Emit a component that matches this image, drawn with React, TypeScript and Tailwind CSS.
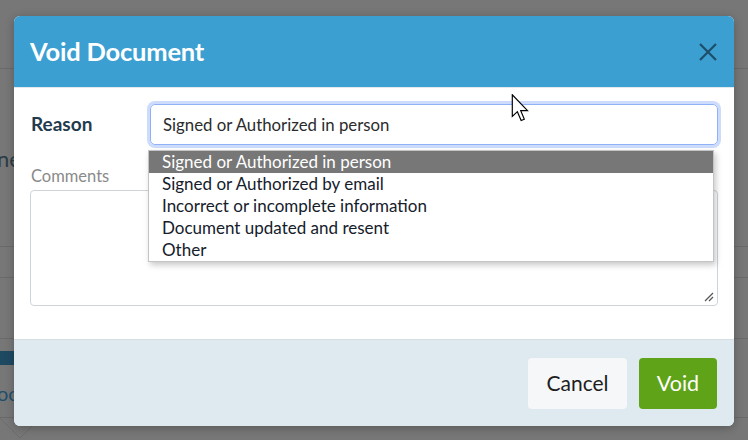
import React from "react";

const options = [
  "Signed or Authorized in person",
  "Signed or Authorized by email",
  "Incorrect or incomplete information",
  "Document updated and resent",
  "Other",
];

export default function App() {
  return (
    <div className="relative w-[748px] h-[440px] overflow-hidden bg-[#777777] font-['Lato',sans-serif]">
      {/* background page (dimmed) */}
      <div className="flex flex-col w-full">
        <div className="h-[69px] border-b border-[#6a6a6a]" />
        <div className="h-[178px] border-b border-[#6a6a6a] flex items-start pt-[78px]">
          <span className="text-[22px] leading-[24px] text-[#2c3c46] -ml-[3px]">ne</span>
        </div>
        <div className="h-[31px] border-b border-[#6a6a6a]" />
        <div className="h-[61px] border-b border-[#6a6a6a]" />
        <div className="h-[12px]" />
        <div className="h-[14px] w-[40px] bg-[#1e4a61]" />
        <div className="h-[16px]" />
        <div className="h-[24px] flex items-center">
          <span className="text-[20px] text-[#1f4f6d] -ml-[3px]">oc</span>
        </div>
        <div className="h-[13px] border-b border-[#6a6a6a]" />
      </div>
      <svg className="absolute left-[0px] top-[412px]" width="60" height="28" viewBox="0 0 60 28">
        <path d="M0 6 L20 26 L40 6" fill="none" stroke="#6c6c6c" strokeWidth="1" />
      </svg>

      {/* modal */}
      <div className="absolute left-[14px] top-[16px] w-[720px] h-[410px] rounded-[6px] overflow-hidden bg-white shadow-[0_2px_10px_rgba(0,0,0,0.25)] flex flex-col">
        <div className="h-[72px] shrink-0 bg-[#3c9fd1] flex items-center justify-between pl-4 pr-[16px] border-b border-[#e3eaef]">
          <h1 className="text-[25.5px] font-bold text-white tracking-[-0.2px] leading-none">Void Document</h1>
          <svg width="20" height="20" viewBox="0 0 20 20" className="mr-[0px]">
            <path d="M2 2 L18 18 M18 2 L2 18" stroke="#1d4d69" strokeWidth="2.2" strokeLinecap="butt" />
          </svg>
        </div>
        <div className="flex-1 bg-white px-4 pt-[16px]">
          <div className="flex items-center">
            <label className="w-[120px] shrink-0 text-[19px] font-bold text-[#1f3b4d] pl-[1px]">Reason</label>
            <div className="relative flex-1">
              <div className="h-[41px] rounded-[5px] border border-[#8fb2f6] ring-[3px] ring-[#cddcfc] flex items-center pl-[12px] text-[16.8px] text-[#2b2b2b]">
                Signed or Authorized in person
              </div>
              <ul className="absolute left-[-2px] top-[46px] w-[566px] bg-white border border-[#c4c4c4] shadow-[2px_3px_6px_rgba(0,0,0,0.22)] z-10">
                {options.map((o, i) => (
                  <li
                    key={o}
                    className={
                      i === 0
                        ? "h-[22px] leading-[22px] pl-[13px] text-[17px] bg-[#777777] text-white"
                        : "h-[22px] leading-[22px] pl-[13px] text-[17px] text-[#15202b]"
                    }
                  >
                    {o}
                  </li>
                ))}
              </ul>
            </div>
          </div>
          <div className="mt-[20px] text-[16.5px] leading-[22px] text-[#8a8a8a] pl-[1px]">Comments</div>
          <div className="relative mt-[3px] h-[116px] rounded-[4px] border border-[#cdd4da]">
            <svg className="absolute right-[3px] bottom-[3px]" width="10" height="10" viewBox="0 0 10 10">
              <path d="M9 1 L1 9 M9 5 L5 9" stroke="#555" strokeWidth="1.2" />
            </svg>
          </div>
        </div>
        <div className="h-[87px] shrink-0 bg-[#dfe9f0] border-t border-[#d5dee5] flex items-center justify-end gap-[12px] pr-[17px]">
          <button className="w-[99px] h-[51px] rounded-[4px] bg-[#f5f7f9] text-[21px] text-[#1e1e1e]">Cancel</button>
          <button className="w-[78px] h-[51px] rounded-[4px] bg-[#5fa318] text-[21.5px] text-white">Void</button>
        </div>
      </div>

      {/* mouse cursor */}
      <svg className="absolute left-[511px] top-[94px]" width="20" height="29" viewBox="0 0 13 20">
        <path d="M0.5 0.5 L0.5 15.5 L4 12.2 L6.6 18.3 L8.8 17.4 L6.3 11.5 L11 11.5 Z" fill="white" stroke="black" strokeWidth="0.8" strokeLinejoin="miter" />
      </svg>
    </div>
  );
}
